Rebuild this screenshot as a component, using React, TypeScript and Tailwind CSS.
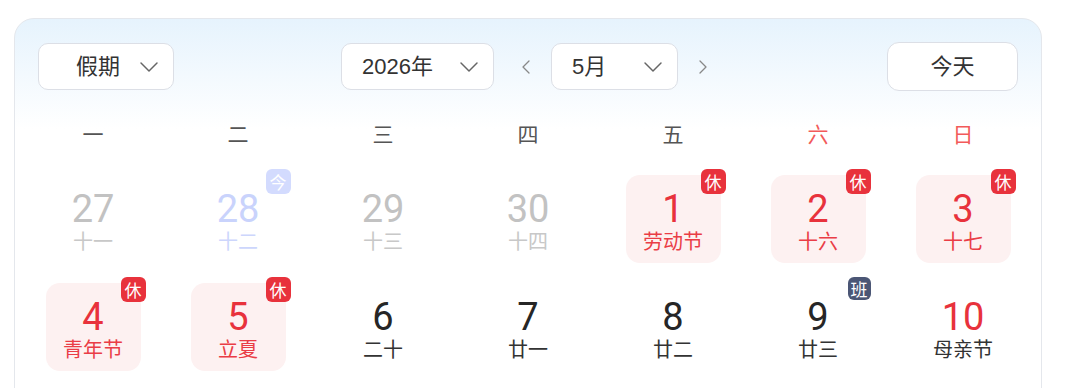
import { ChevronDown, ChevronLeft, ChevronRight } from "lucide-react";

type DayType = "other" | "today" | "holiday" | "normal" | "work" | "sunday";

type Day = {
  date: number;
  lunar: string;
  type: DayType;
  badge?: string;
};

const weekdays = ["一", "二", "三", "四", "五", "六", "日"];

const days: Day[] = [
  { date: 27, lunar: "十一", type: "other" },
  { date: 28, lunar: "十二", type: "today", badge: "今" },
  { date: 29, lunar: "十三", type: "other" },
  { date: 30, lunar: "十四", type: "other" },
  { date: 1, lunar: "劳动节", type: "holiday", badge: "休" },
  { date: 2, lunar: "十六", type: "holiday", badge: "休" },
  { date: 3, lunar: "十七", type: "holiday", badge: "休" },
  { date: 4, lunar: "青年节", type: "holiday", badge: "休" },
  { date: 5, lunar: "立夏", type: "holiday", badge: "休" },
  { date: 6, lunar: "二十", type: "normal" },
  { date: 7, lunar: "廿一", type: "normal" },
  { date: 8, lunar: "廿二", type: "normal" },
  { date: 9, lunar: "廿三", type: "work", badge: "班" },
  { date: 10, lunar: "母亲节", type: "sunday" },
];

const numberColor: Record<DayType, string> = {
  other: "text-[#c2c2c2]",
  today: "text-[#c9d3fc]",
  holiday: "text-[#e8323c]",
  normal: "text-[#262626]",
  work: "text-[#262626]",
  sunday: "text-[#e8323c]",
};

const lunarColor: Record<DayType, string> = {
  other: "text-[#c8c8c8]",
  today: "text-[#cdd6fc]",
  holiday: "text-[#ea3d46]",
  normal: "text-[#333333]",
  work: "text-[#333333]",
  sunday: "text-[#333333]",
};

const badgeStyle: Record<string, string> = {
  "今": "bg-[#d3dbfe] w-[25px] h-[25px]",
  "休": "bg-[#e8323c] w-[25px] h-[25px]",
  "班": "bg-[#4b5675] w-[23px] h-[23px]",
};

const Select = ({ label, className }: { label: string; className: string }) => (
  <div
    className={`h-[47px] flex items-center justify-between bg-white border border-[#dcdfe6] rounded-[10px] text-[22px] text-[#333] ${className}`}
  >
    <span className="leading-none">{label}</span>
    <ChevronDown size={32} strokeWidth={1.1} className="text-[#666]" />
  </div>
);

const DayCell = ({ day }: { day: Day }) => (
  <div className="h-[108px] flex items-center justify-center">
    <div
      className={`relative w-[95px] h-[88px] rounded-[14px] flex flex-col items-center pt-[18px] ${
        day.type === "holiday" ? "bg-[#fdf1f1]" : ""
      }`}
    >
      {day.badge && (
        <span
          className={`absolute -top-[6px] -right-[5px] rounded-[6px] flex items-center justify-center text-white text-[17px] leading-none ${badgeStyle[day.badge]}`}
        >
          {day.badge}
        </span>
      )}
      <span
        className={`font-['Roboto',sans-serif] font-normal text-[38px] leading-[32px] ${numberColor[day.type]}`}
      >
        {day.date}
      </span>
      <span className={`mt-[5px] text-[20px] leading-[22px] ${lunarColor[day.type]}`}>
        {day.lunar}
      </span>
    </div>
  </div>
);

export default function App() {
  return (
    <div className="w-[1080px] h-[388px] overflow-hidden bg-white font-['Liberation_Sans','Noto_Sans_CJK_SC',sans-serif]">
      <div className="ml-[14px] mt-[18px] w-[1028px] h-[400px] border border-[#e4e7ec] rounded-t-[20px] bg-[linear-gradient(to_bottom,#e6f3fd,#ffffff_110px)]">
        <div className="px-[23px] pt-[23px] grid grid-cols-[1fr_auto_1fr] items-center h-[72px]">
          <Select label="假期" className="w-[136px] pl-[37px] pr-[8px]" />
          <div className="flex items-center">
            <Select label="2026年" className="w-[153px] pl-[20px] pr-[8px]" />
            <button className="ml-[20px] mr-[13px] w-[24px] flex justify-center text-[#888]">
              <ChevronLeft size={32} strokeWidth={1.3} />
            </button>
            <Select label="5月" className="w-[127px] pl-[20px] pr-[8px]" />
            <button className="ml-[13px] w-[24px] flex justify-center text-[#888]">
              <ChevronRight size={32} strokeWidth={1.3} />
            </button>
          </div>
          <div className="flex justify-end">
            <button className="w-[131px] h-[49px] bg-white border border-[#dcdfe6] rounded-[12px] text-[22px] text-[#333]">
              今天
            </button>
          </div>
        </div>

        <div className="w-[1015px] mx-auto mt-[30px] grid grid-cols-7 h-[28px]">
          {weekdays.map((w, i) => (
            <div
              key={w}
              className={`text-center text-[21px] leading-[28px] ${
                i >= 5 ? "text-[#f25a5a]" : "text-[#555]"
              }`}
            >
              {w}
            </div>
          ))}
        </div>

        <div className="w-[1015px] mx-auto mt-[16px] grid grid-cols-7 font-['Noto_Sans_CJK_SC',sans-serif]">
          {days.map((d) => (
            <DayCell key={`${d.type}-${d.date}`} day={d} />
          ))}
        </div>
      </div>
    </div>
  );
}
